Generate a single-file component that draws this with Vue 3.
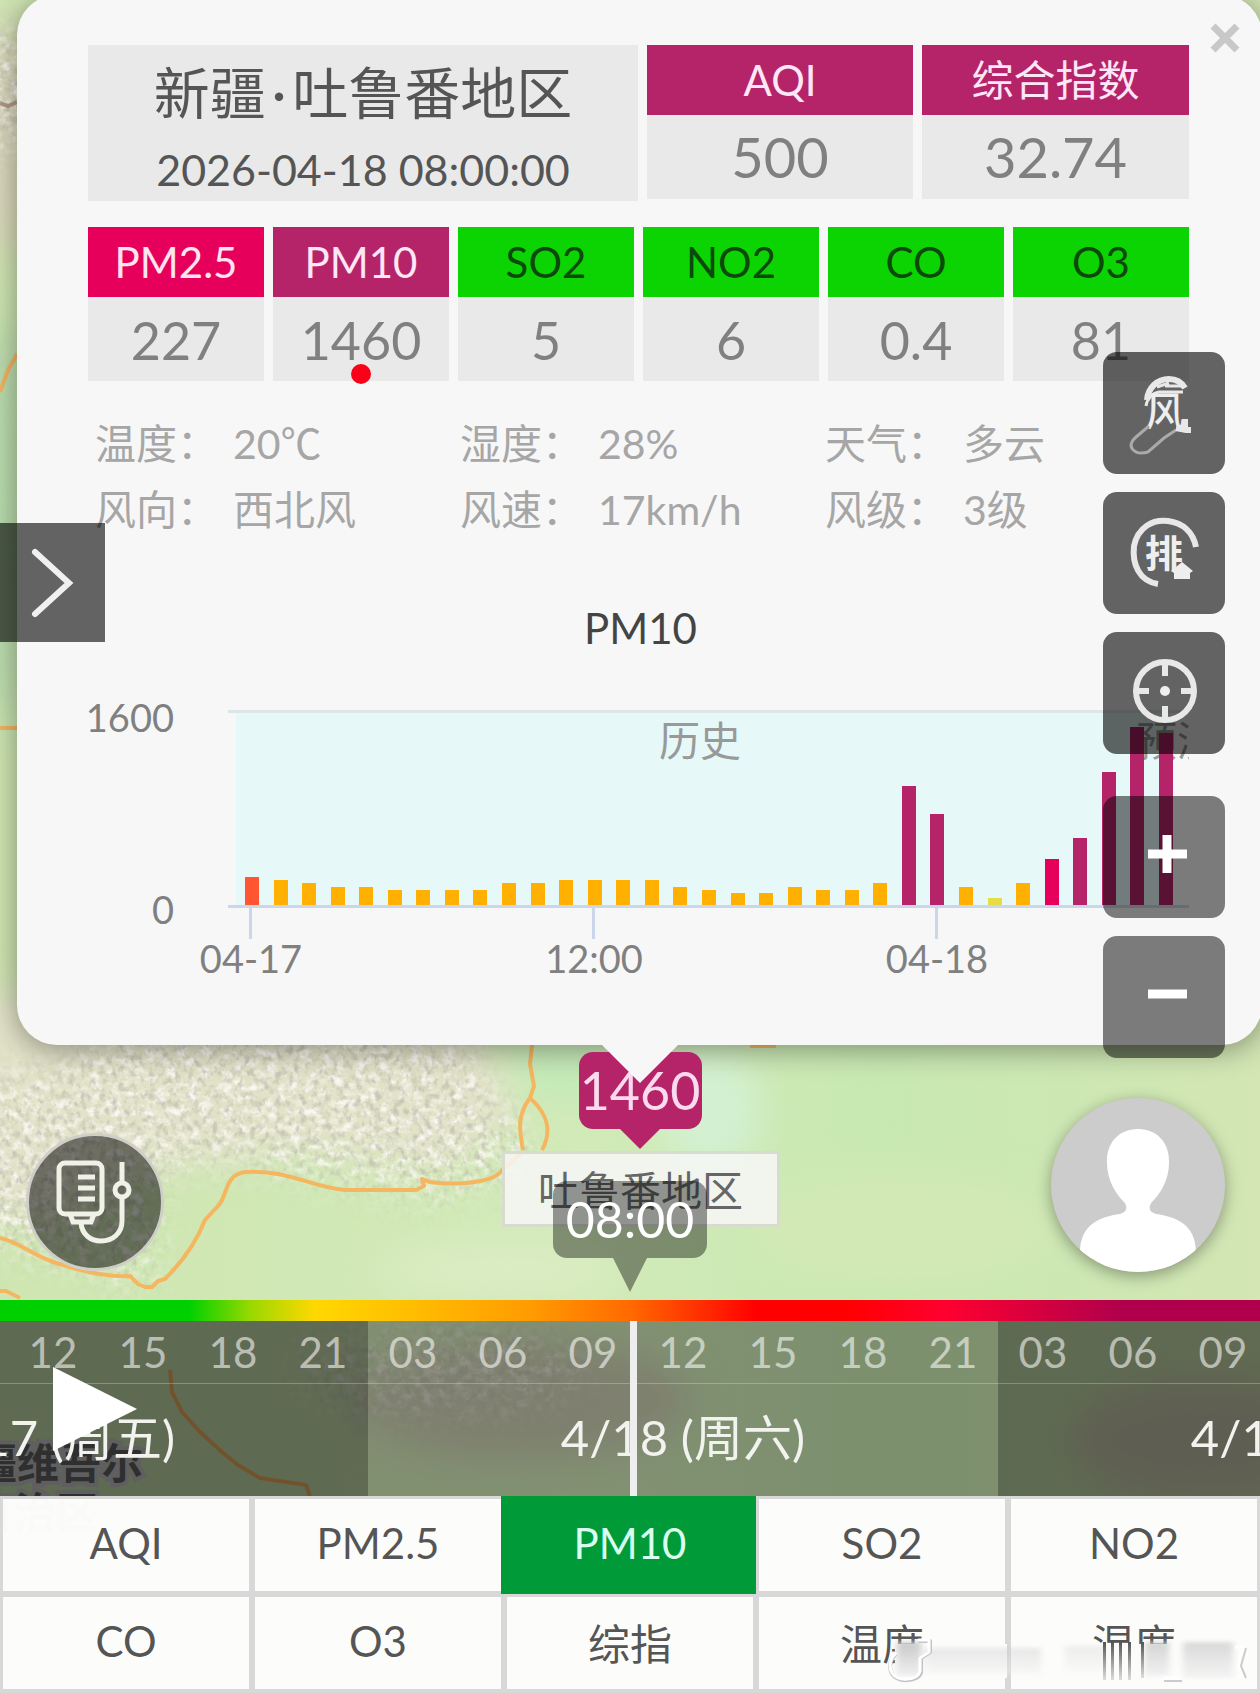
<template>
  <div class="page">
    <svg class="map" viewBox="0 0 1260 1693" preserveAspectRatio="xMidYMin slice" aria-hidden="true">
      <defs>
        <linearGradient id="land" x1="0" y1="0" x2="1" y2="0">
          <stop offset="0" stop-color="#cfe6b2" />
          <stop offset="0.45" stop-color="#d2eab8" />
          <stop offset="0.7" stop-color="#c8e9b2" />
          <stop offset="1" stop-color="#d3e6b4" />
        </linearGradient>
        <filter id="soft" x="-30%" y="-30%" width="160%" height="160%">
          <feGaussianBlur stdDeviation="18" />
        </filter>
        <filter id="relief" x="0" y="0" width="100%" height="100%">
          <feTurbulence type="fractalNoise" baseFrequency="0.16 0.13" numOctaves="4" seed="8" />
          <feColorMatrix values="0 0 0 0 0.5  0 0 0 0 0.5  0 0 0 0 0.42  2.4 1.6 0 0 -1.9" />
        </filter>
        <filter id="snow" x="0" y="0" width="100%" height="100%">
          <feTurbulence type="fractalNoise" baseFrequency="0.09 0.12" numOctaves="4" seed="21" />
          <feColorMatrix values="0 0 0 0 0.96  0 0 0 0 0.93  0 0 0 0 0.88  2.4 1.8 0 0 -1.9" />
        </filter>
        <mask id="hills">
          <g filter="url(#soft)" fill="#fff">
            <path d="M-60 1080 L60 1070 L120 1020 L450 1020 L510 1120 L540 1160 L440 1200 L330 1180 L230 1160 L160 1165 L150 1290 L60 1260 L-60 1230Z" />
            <ellipse cx="0" cy="90" rx="40" ry="60" />
            <ellipse cx="440" cy="1370" rx="150" ry="45" opacity="0.6" />
          </g>
        </mask>
      </defs>
      <rect width="1260" height="1693" fill="url(#land)" />
      <g filter="url(#soft)">
        <path d="M-60 990 L460 990 L520 1120 L440 1170 L300 1150 L130 1170 L60 1220 L-60 1210Z" fill="#e2e2c8" />
        <ellipse cx="710" cy="1110" rx="50" ry="60" fill="#d3f1d2" />
        <ellipse cx="500" cy="1270" rx="120" ry="26" fill="#dcedc4" />
        <ellipse cx="900" cy="1230" rx="150" ry="60" fill="#d3e9b5" />
        <ellipse cx="570" cy="1070" rx="60" ry="30" fill="#c3eab8" />
        <ellipse cx="0" cy="140" rx="40" ry="120" fill="#dcd9bd" />
        <ellipse cx="0" cy="520" rx="40" ry="200" fill="#badcae" />
        <ellipse cx="520" cy="1400" rx="170" ry="60" fill="#cdcfb4" />
        <ellipse cx="1200" cy="1440" rx="130" ry="60" fill="#d0ceb2" />
      </g>
      <g mask="url(#hills)">
        <rect width="1260" height="1693" filter="url(#snow)" />
        <rect width="1260" height="1693" filter="url(#relief)" opacity="0.75" />
      </g>
      <g fill="none" stroke="#f5b660" stroke-width="4" stroke-linejoin="round">
        <path d="M0 1291H6L20 1298 M0 1238C20 1242 36 1258 60 1264C90 1274 110 1277 130 1276L138 1284L145 1287H152L158 1281L165 1279C180 1264 195 1246 205 1220L218 1206C228 1196 224 1174 246 1172C290 1170 310 1187 345 1190H416L424 1186L422 1179L430 1182C460 1186 495 1182 502 1170L523 1152M532 1045L530 1064L534 1086L530 1098C548 1114 552 1132 542 1150M530 1098C516 1116 520 1132 523 1150" />
        <path d="M170 1370L172 1392L182 1412L200 1432L222 1452L238 1465L260 1478L306 1485L310 1496" />
        <path d="M0 392L8 370L17 354M0 728H17M750 1046H776" />
      </g>
      <path d="M0 103L8 106L17 102" fill="none" stroke="#b29a86" stroke-width="4" />
      <g class="map-label">
        <text x="143" y="1479" text-anchor="end">新疆维吾尔</text>
        <text x="98" y="1528" text-anchor="end">自治区</text>
      </g>
    </svg>

    <main class="stage">
      <section class="card">
        <button class="close" type="button" aria-label="关闭">
          <svg viewBox="0 0 30 30"><path d="M3 3L27 27M27 3L3 27" /></svg>
        </button>

        <div class="summary">
          <header class="place">
            <h1>新疆<span class="dot">·</span>吐鲁番地区</h1>
            <time>2026-04-18 08:00:00</time>
          </header>
          <div v-for="item in indexes" :key="item.name" class="metric large">
            <div class="metric-name hazard">{{ item.name }}</div>
            <div class="metric-value">{{ item.value }}</div>
          </div>
        </div>

        <div class="pollutants">
          <div v-for="item in pollutants" :key="item.name" class="metric" :class="{ selected: item.name === active }">
            <div class="metric-name" :class="item.level">{{ item.name }}</div>
            <div class="metric-value">{{ item.value }}</div>
          </div>
        </div>

        <dl class="weather">
          <div v-for="item in weather" :key="item.name">
            <dt>{{ item.name }}：</dt>
            <dd>{{ item.value }}</dd>
          </div>
        </dl>

        <h2>{{ active }}</h2>
        <svg class="chart" viewBox="0 0 1101 337" role="img" aria-label="PM10">
          <rect x="148" y="54" width="928" height="194" fill="#e6f8f8" />
          <rect x="140" y="52" width="961" height="3" fill="#dde6e6" />
          <text class="band" x="612" y="98">历史</text>
          <text class="band" x="1089" y="98">预测</text>
          <rect
            v-for="(bar, i) in bars"
            :key="i"
            :x="bar.x"
            :y="bar.y"
            width="14"
            :height="bar.height"
            :fill="bar.color"
          />
          <rect x="140" y="247" width="961" height="3" fill="#ccd6eb" />
          <g v-for="tick in ticks" :key="tick.label">
            <rect :x="tick.x - 1" y="250" width="3" height="31" fill="#ccd6eb" />
            <text :x="tick.x + 1" y="315" text-anchor="middle">{{ tick.label }}</text>
          </g>
          <text x="86" y="74" text-anchor="end">1600</text>
          <text x="86" y="266" text-anchor="end">0</text>
        </svg>

        <div class="pin">1460</div>
        <div class="place-name">吐鲁番地区</div>
        <div class="tip"></div>
      </section>

      <button class="drawer" type="button" aria-label="展开">
        <svg viewBox="0 0 105 119"><path d="M35 29L69 60L35 91" /></svg>
      </button>

      <nav class="tools">
        <button type="button" aria-label="风场">
          <svg viewBox="0 0 122 122">
            <path class="bold" d="M44 48C45 36 54 27 66 27C75 27 79 31 82 36" />
            <path d="M43 54C44 47 49 41 56 40H80M54 35L66 31M62 34H82" />
            <text x="62" y="73" font-size="39" font-weight="500">风</text>
            <path class="faint" d="M46 74L33 85C22 94 31 104 45 100L61 86L73 78" />
            <path class="bold" d="M73 76L83 78H88M82 67V79" />
          </svg>
        </button>
        <button type="button" aria-label="排名">
          <svg viewBox="0 0 122 122">
            <path class="ring" d="M55 92C36 89 29 72 31 54C35 35 50 27 65 29C80 31 90 40 93 55" />
            <text x="61" y="75" font-size="38" font-weight="700">排</text>
            <path class="solid" d="M68 79L79 70L90 79L87 81V87H71V81Z" />
          </svg>
        </button>
        <button type="button" aria-label="定位">
          <svg viewBox="0 0 122 122">
            <circle class="ring" cx="62" cy="59" r="29" />
            <path class="ring" d="M62 30V44M62 74V88M33 59H46M78 59H91" />
            <circle class="solid" cx="62" cy="59" r="5" />
          </svg>
        </button>
        <div class="zoom">
          <button type="button" aria-label="放大">
            <svg viewBox="0 0 122 122"><path class="sign" d="M45 58H84M64 39V77" /></svg>
          </button>
          <button type="button" aria-label="缩小">
            <svg viewBox="0 0 122 122"><path class="sign" d="M45 58H84" /></svg>
          </button>
        </div>
      </nav>

      <button class="drip" type="button" aria-label="报告">
        <svg viewBox="0 0 132 132">
          <rect x="30" y="27" width="43" height="51" rx="6" />
          <path d="M49 41H66M49 52H66M49 63H66" />
          <path d="M41 78L44 86H62L65 78M52 87C53 99 62 105 72 105C84 105 93 97 93 85V62M93 26V46" />
          <circle cx="93" cy="54" r="7" />
        </svg>
      </button>

      <button class="avatar" type="button" aria-label="用户">
        <svg viewBox="0 0 174 174">
          <path d="M87 31C107 31 119 46 118 65C118 82 109 96 101 104C97 109 98 114 105 116C125 119 145 126 145 155V174H29V155C29 126 49 119 69 116C76 114 77 109 73 104C65 96 56 82 56 65C55 46 67 31 87 31Z" />
        </svg>
      </button>

      <div class="bubble">08:00</div>
    </main>

    <div class="scale"></div>

    <section class="timeline">
      <div class="days">
        <div v-for="day in days" :key="day.label" class="day" :class="{ current: day.current }">
          <div class="hours">
            <span v-for="hour in hours" :key="hour">{{ hour }}</span>
          </div>
          <div class="date">{{ day.label }}</div>
        </div>
      </div>
      <div class="cursor"></div>
      <button class="play" type="button" aria-label="播放">
        <svg viewBox="0 0 84 84"><path d="M0 0L84 42L0 84Z" /></svg>
      </button>
    </section>

    <nav class="tabs">
      <button
        v-for="(tab, i) in tabs"
        :key="i"
        type="button"
        :class="{ active: tab === active }"
        @click="active = tab"
      >
        {{ tab }}
      </button>
      <svg class="mark" viewBox="0 0 370 56" aria-hidden="true">
        <defs>
          <filter id="smear" x="-5%" y="-20%" width="110%" height="140%">
            <feGaussianBlur stdDeviation="3 2" />
          </filter>
          <linearGradient id="fade" x1="0" y1="0" x2="0" y2="1">
            <stop offset="0" stop-color="#c9c9c9" />
            <stop offset="1" stop-color="#f0f0f0" />
          </linearGradient>
          <linearGradient id="streak" x1="0" y1="0" x2="0" y2="1">
            <stop offset="0" stop-color="#555" />
            <stop offset="1" stop-color="#ddd" />
          </linearGradient>
        </defs>
        <rect x="10" y="16" width="112" height="34" fill="#fcfcfb" />
        <rect x="136" y="16" width="224" height="34" fill="#fcfcfb" />
        <g filter="url(#smear)" fill="url(#fade)">
          <rect x="12" y="14" width="24" height="34" />
          <rect x="40" y="20" width="116" height="26" opacity="0.4" />
          <rect x="180" y="18" width="40" height="26" opacity="0.3" />
          <rect x="260" y="14" width="24" height="34" opacity="0.8" />
          <rect x="298" y="14" width="50" height="36" opacity="0.7" />
        </g>
        <g fill="url(#streak)">
          <rect x="218" y="14" width="3" height="38" />
          <rect x="226" y="14" width="3" height="38" />
          <rect x="234" y="14" width="3" height="38" />
          <rect x="243" y="14" width="3" height="38" />
          <rect x="256" y="14" width="3" height="36" />
        </g>
        <path d="M33 13H45V24L36 30V44C34 54 13 55 7 46C3 38 6 30 11 26" fill="none" stroke="#c4c4c4" stroke-width="4" stroke-linejoin="round" />
        <path d="M33 12H44V24L35 30V43C33 53 13 54 7 45C3 37 6 29 11 25M279 50H295M350 19H358L353 37L359 49L352 49" fill="none" stroke="#fff" stroke-width="3" stroke-linejoin="round" />
        <path d="M279 53H297M361 20L356 38L361 50" fill="none" stroke="#ccc" stroke-width="2" />
      </svg>
    </nav>
  </div>
</template>

<script setup>
import { computed, ref } from 'vue'

const active = ref('PM10')

const indexes = [
  { name: 'AQI', value: '500' },
  { name: '综合指数', value: '32.74' },
]

const pollutants = [
  { name: 'PM2.5', value: '227', level: 'severe' },
  { name: 'PM10', value: '1460', level: 'hazard' },
  { name: 'SO2', value: '5', level: 'good' },
  { name: 'NO2', value: '6', level: 'good' },
  { name: 'CO', value: '0.4', level: 'good' },
  { name: 'O3', value: '81', level: 'good' },
]

const weather = [
  { name: '温度', value: '20℃' },
  { name: '湿度', value: '28%' },
  { name: '天气', value: '多云' },
  { name: '风向', value: '西北风' },
  { name: '风速', value: '17km/h' },
  { name: '风级', value: '3级' },
]

const history = [
  230, 205, 180, 150, 150, 120, 120, 120, 120, 180, 180, 205, 205, 205, 205, 150, 120,
  95, 95, 150, 120, 120, 180, 975, 745, 150, 60, 180, 375, 545, 1085, 1455, 1400,
]

const ticks = [
  { label: '04-17', x: 162 },
  { label: '12:00', x: 505 },
  { label: '04-18', x: 848 },
]

const levelColor = (value) => {
  if (value >= 500) return '#b52468'
  if (value >= 350) return '#e6005c'
  if (value >= 210) return '#ff5533'
  if (value >= 90) return '#ffb000'
  return '#e6dc46'
}

const bars = computed(() =>
  history.map((value, i) => {
    const height = Math.round((value / 1600) * 196)
    return {
      x: Math.round(157 + i * 28.56),
      y: 247 - height,
      height,
      color: levelColor(value),
    }
  })
)

const hours = ['03', '06', '09', '12', '15', '18', '21']

const days = [
  { label: '4/17 (周五)' },
  { label: '4/18 (周六)', current: true },
  { label: '4/19 (周日)' },
]

const tabs = ['AQI', 'PM2.5', 'PM10', 'SO2', 'NO2', 'CO', 'O3', '综指', '温度', '湿度']
</script>

<style>
body {
  margin: 0;
}
</style>

<style scoped>
.page {
  position: relative;
  display: flex;
  flex-direction: column;
  min-height: 100vh;
  overflow: hidden;
  font-family: Lato, 'Noto Sans CJK SC', sans-serif;
  background: #cfe7b5;
}

button {
  padding: 0;
  border: 0;
  background: none;
  font: inherit;
  cursor: pointer;
}

button svg {
  display: block;
  width: 100%;
  height: 100%;
  fill: none;
}

.map {
  position: absolute;
  inset: 0;
  width: 100%;
  height: 100%;
}

.map-label {
  font-size: 42px;
  font-weight: 700;
  fill: #666;
  stroke: #d0d0d0;
  stroke-width: 8px;
  paint-order: stroke;
}

.stage {
  position: relative;
  flex: 1;
}

.card {
  position: relative;
  margin: -5px -2px 255px 17px;
  padding: 50px 73px 50px 71px;
  border-radius: 40px;
  background: #f7f7f7;
  box-shadow: 0 4px 30px rgba(0, 0, 0, 0.4);
}

.close {
  position: absolute;
  top: 28px;
  right: 22px;
  width: 30px;
  height: 30px;
}

.close svg {
  stroke: #c8c8c8;
  stroke-width: 7;
}

.summary {
  display: grid;
  grid-template-columns: 550fr 266fr 267fr;
  gap: 9px;
  align-items: start;
}

.place {
  display: flex;
  flex-direction: column;
  align-items: center;
  height: 156px;
  background: #e9e9e9;
  color: #555;
}

.place h1 {
  margin: 8px 0 0;
  font-size: 56px;
  font-weight: 400;
  line-height: 80px;
}

.dot {
  margin: 0 6px;
}

.place time {
  font-size: 43px;
  line-height: 74px;
}

.pollutants {
  display: grid;
  grid-template-columns: repeat(6, 1fr);
  gap: 9px;
  margin-top: 26px;
}

.metric {
  position: relative;
  text-align: center;
}

.metric-name {
  font-size: 42px;
  line-height: 70px;
  height: 70px;
}

.metric-value {
  height: 84px;
  background: #e9e9e9;
  color: #808080;
  font-size: 52px;
  line-height: 86px;
}

.large .metric-value {
  font-size: 56px;
  line-height: 84px;
}

.hazard {
  background: #b52468;
  color: #fde6f6;
}

.severe {
  background: #e6005c;
  color: #ffe4f0;
}

.good {
  background: #0cd403;
  color: #0c4a0c;
}

.selected::after {
  content: '';
  position: absolute;
  bottom: -3px;
  left: 50%;
  width: 20px;
  height: 20px;
  margin-left: -10px;
  border-radius: 50%;
  background: #fb0019;
}

.weather {
  display: grid;
  grid-template-columns: repeat(3, 1fr);
  margin: 30px 0 0;
  padding-right: 6px;
  color: #a6a6a6;
  font-size: 41px;
  line-height: 66px;
}

.weather div {
  display: flex;
  gap: 15px;
  padding-left: 7px;
}

.weather dd {
  margin: 0;
}

h2 {
  margin: 55px 0 0;
  padding-left: 4px;
  color: #444;
  font-size: 42px;
  font-weight: 400;
  line-height: 60px;
  text-align: center;
}

.chart {
  display: block;
  width: 100%;
  overflow: hidden;
  font-size: 38px;
  fill: #808080;
}

.band {
  font-size: 41px;
  fill: #999;
  text-anchor: middle;
}

.tip {
  position: absolute;
  top: 100%;
  left: 50%;
  margin-left: -38px;
  border: 38px solid transparent;
  border-top-color: #f7f7f7;
  border-bottom: 0;
}

.pin {
  position: absolute;
  top: calc(100% + 7px);
  left: 50%;
  width: 123px;
  margin-left: -61px;
  border-radius: 14px;
  background: #b52468;
  color: #fbd9ee;
  font-size: 52px;
  line-height: 77px;
  text-align: center;
}

.pin::after {
  content: '';
  position: absolute;
  top: 100%;
  left: 50%;
  margin-left: -20px;
  border: 20px solid transparent;
  border-top-color: #b52468;
  border-bottom: 0;
}

.place-name {
  position: absolute;
  top: calc(100% + 106px);
  left: 50%;
  width: 272px;
  height: 70px;
  margin-left: -138px;
  border: 3px solid #d8dccf;
  background: rgba(247, 247, 247, 0.85);
  color: #666;
  font-size: 41px;
  line-height: 74px;
  text-align: center;
}

.drawer {
  position: absolute;
  top: 523px;
  left: 0;
  width: 105px;
  height: 119px;
  background: rgba(0, 0, 0, 0.6);
}

.drawer svg {
  stroke: #f0f0f0;
  stroke-width: 6;
  stroke-linecap: round;
}

.tools {
  position: absolute;
  top: 352px;
  right: 35px;
  display: flex;
  flex-direction: column;
  gap: 18px;
}

.tools button {
  width: 122px;
  height: 122px;
  border-radius: 14px;
  background: rgba(0, 0, 0, 0.6);
}

.tools svg {
  stroke: #e8e8e8;
  stroke-width: 3;
}

.tools text {
  fill: #eee;
  stroke: none;
  text-anchor: middle;
}

.tools .bold {
  stroke-width: 6;
}

.tools .faint {
  stroke: #aaa;
}

.tools .ring {
  stroke-width: 6;
}

.tools .solid {
  fill: #eee;
  stroke: none;
}

.zoom {
  display: flex;
  flex-direction: column;
  gap: 18px;
  margin-top: 24px;
}

.tools .zoom button {
  background: rgba(0, 0, 0, 0.5);
}

.tools .sign {
  stroke: #fff;
  stroke-width: 9;
}

.drip {
  position: absolute;
  bottom: 29px;
  left: 26px;
  width: 138px;
  height: 138px;
  border: 3px solid #cfcfca;
  border-radius: 50%;
  background: rgba(0, 0, 0, 0.52);
}

.drip svg {
  stroke: #f0f2e8;
  stroke-width: 5;
}

.avatar {
  position: absolute;
  right: 35px;
  bottom: 28px;
  width: 174px;
  height: 174px;
  border-radius: 50%;
  background: #ccc;
  box-shadow: 0 4px 16px rgba(0, 0, 0, 0.35);
  overflow: hidden;
}

.avatar path {
  fill: #fff;
}

.bubble {
  position: absolute;
  bottom: 42px;
  left: 50%;
  width: 154px;
  margin-left: -77px;
  border-radius: 14px;
  background: rgba(0, 0, 0, 0.4);
  color: #fff;
  font-size: 50px;
  line-height: 77px;
  text-align: center;
}

.bubble::after {
  content: '';
  position: absolute;
  top: 100%;
  left: 50%;
  margin-left: -17px;
  border: 17px solid transparent;
  border-top: 34px solid rgba(0, 0, 0, 0.4);
  border-bottom: 0;
}

.scale {
  position: relative;
  height: 21px;
  background: linear-gradient(
    90deg,
    #00d000 15%,
    #9cd800 20%,
    #ffd800 25%,
    #ff9c00 42%,
    #ff6a00 50%,
    #ff0000 60%,
    #ff0000 67%,
    #ff0030 75%,
    #b0004c 89%,
    #b0004c
  );
}

.timeline {
  position: relative;
  overflow: hidden;
}

/* three days wide, each day takes half of the window */
.days {
  display: flex;
  width: 150%;
  margin-left: -20.8%;
}

.day {
  flex: 1;
  background: rgba(0, 0, 0, 0.54);
  color: #f2f2ee;
  text-align: center;
}

.day.current {
  background: rgba(0, 0, 0, 0.38);
}

.hours {
  display: grid;
  grid-template-columns: repeat(7, 1fr);
  border-bottom: 1px solid rgba(255, 255, 255, 0.25);
  color: rgba(255, 255, 255, 0.58);
  font-size: 42px;
  line-height: 62px;
}

.date {
  padding-bottom: 6px;
  font-size: 49px;
  line-height: 106px;
}

.cursor {
  position: absolute;
  top: 0;
  bottom: 0;
  left: 50%;
  width: 7px;
  background: #eee;
}

.play {
  position: absolute;
  top: 46px;
  left: 53px;
  width: 84px;
  height: 84px;
}

.play path {
  fill: #fff;
}

.tabs {
  position: relative;
  display: grid;
  grid-template-columns: repeat(5, 1fr);
  border-bottom: 1px solid #d8d8d8;
}

.tabs button {
  height: 98px;
  padding-bottom: 4px;
  border: 3px solid #d8d8d8;
  background: rgba(253, 253, 252, 0.98);
  color: #555;
  font-size: 42px;
}

.tabs .active {
  margin: 0 -3px;
  border-color: #009b38;
  background: #009b38;
  color: #d8fff0;
}

.mark {
  position: absolute;
  right: 5px;
  bottom: 8px;
  width: 370px;
  height: 56px;
}
</style>
